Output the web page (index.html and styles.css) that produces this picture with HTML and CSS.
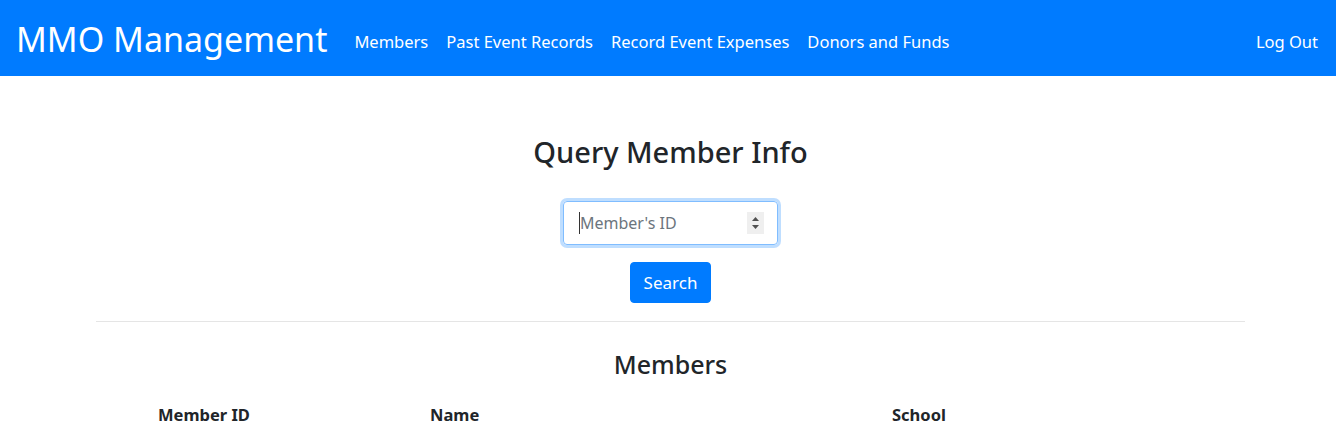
FILE: index.html
```html
<!DOCTYPE html>
<html lang="en">
<head>
<meta charset="utf-8">
<title>MMO Management</title>
<link rel="stylesheet" href="styles.css">
</head>
<body>
<nav class="navbar">
  <a class="brand" href="#">MMO Management</a>
  <ul class="nav-links">
    <li><a href="#">Members</a></li>
    <li><a href="#">Past Event Records</a></li>
    <li><a href="#">Record Event Expenses</a></li>
    <li><a href="#">Donors and Funds</a></li>
  </ul>
  <a class="logout" href="#">Log Out</a>
</nav>
<main class="main">
  <section class="query">
    <h2 class="query-title">Query Member Info</h2>
    <div class="input-box">
      <span class="caret"></span>
      <span class="placeholder">Member's ID</span>
      <span class="spinner">
        <svg width="17" height="22" viewBox="0 0 17 22"><path d="M5 9 L8.5 5 L12 9 Z" fill="#505050"/><path d="M5 13 L8.5 17 L12 13 Z" fill="#505050"/></svg>
      </span>
    </div>
    <button class="btn" type="button">Search</button>
  </section>
  <hr class="divider">
  <section class="members">
    <h3 class="members-title">Members</h3>
    <table class="table">
      <thead>
        <tr><th class="c1">Member ID</th><th class="c2">Name</th><th class="c3">School</th></tr>
      </thead>
    </table>
  </section>
</main>
</body>
</html>
```
FILE: styles.css
```css
* { box-sizing: border-box; }
html, body { margin: 0; padding: 0; }
body {
  font-family: "Noto Sans", "Open Sans", sans-serif;
  color: #212529;
  background: #fff;
  overflow: hidden;
}
a { text-decoration: none; }
.navbar {
  height: 76px;
  background: #007bff;
  display: flex;
  align-items: center;
  padding: 0 18px 0 16px;
}
.brand {
  color: #fff;
  font-size: 34px;
  line-height: 1;
  margin-right: 18px;
  padding-top: 2px;
}
.nav-links {
  list-style: none;
  display: flex;
  margin: 6px 0 0;
  padding: 0;
  flex: 1;
}
.nav-links a, .logout {
  color: #fff;
  font-size: 16.5px;
  display: block;
  padding: 8px 9px;
}
.logout { padding-right: 0; margin-top: 6px; }
.main { padding: 0 91px 0 96px; }
.query {
  display: flex;
  flex-direction: column;
  align-items: center;
}
.query-title {
  font-size: 29px;
  font-weight: 500;
  margin: 59px 0 0;
  line-height: 1.2;
}
.input-box {
  margin-top: 31px;
  width: 215px;
  height: 44px;
  border: 1px solid #80bdff;
  border-radius: 4px;
  box-shadow: 0 0 0 3px rgba(0,123,255,.25);
  display: flex;
  align-items: center;
  padding: 0 13px 0 15px;
}
.caret { width: 1px; height: 22px; background: #333; }
.placeholder { color: #6c757d; font-size: 16px; flex: 1; }
.spinner {
  width: 17px;
  height: 22px;
  background: #efefef;
  display: flex;
}
.btn {
  margin-top: 17px;
  font-family: inherit;
  font-size: 17px;
  color: #fff;
  background: #007bff;
  border: 1px solid #007bff;
  border-radius: 4px;
  width: 81px;
  height: 41px;
  padding: 0;
}
.divider {
  margin: 18px 0 0;
  border: 0;
  border-top: 1px solid rgba(0,0,0,.1);
}
.members { text-align: center; }
.members-title {
  font-size: 25px;
  font-weight: 500;
  margin: 27px 0 0;
  line-height: 1.2;
}
.table {
  width: 100%;
  border-collapse: collapse;
  margin-top: 24px;
  text-align: left;
}
.table th {
  font-size: 16.5px;
  font-weight: 700;
  padding: 0;
}
.c1 { padding-left: 62px !important; width: 334px; }
.c2 { width: 462px; }
```
